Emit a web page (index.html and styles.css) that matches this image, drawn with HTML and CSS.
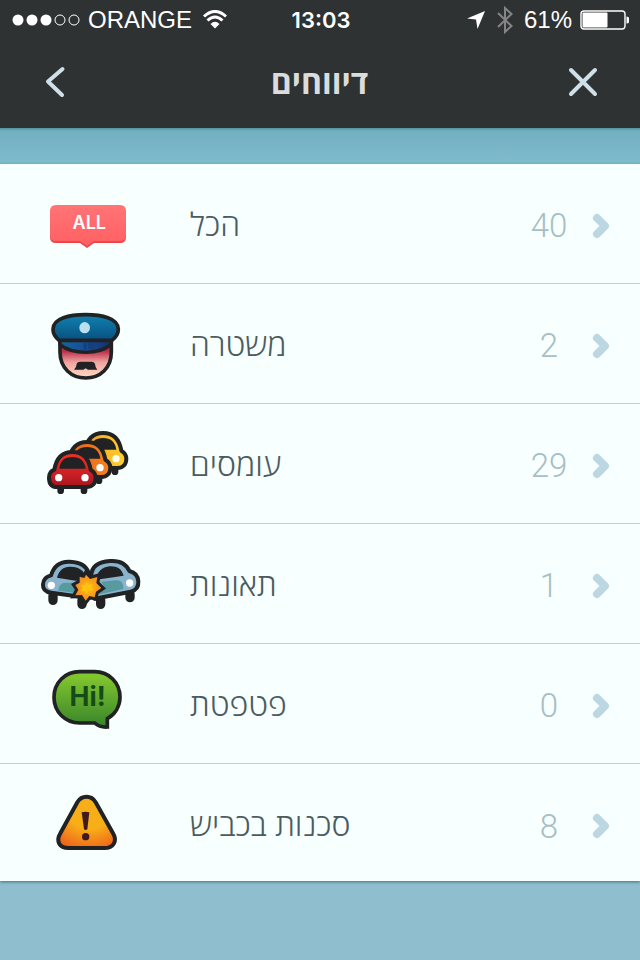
FILE: index.html
```html
<!DOCTYPE html>
<html lang="he">
<head>
    <meta charset="UTF-8">
    <meta name="viewport" content="width=device-width, initial-scale=1.0">
    <title>דיווחים</title>
    <link rel="stylesheet" href="styles.css">
</head>
<body>
    <header class="top">
        <div class="status-bar">
            <div class="carrier">
                <svg class="signal" width="68" height="14" viewBox="0 0 68 14">
                    <circle cx="6" cy="7" r="5.5" fill="#fff"/>
                    <circle cx="20" cy="7" r="5.5" fill="#fff"/>
                    <circle cx="34" cy="7" r="5.5" fill="#fff"/>
                    <circle cx="48" cy="7" r="5" fill="none" stroke="#fff"/>
                    <circle cx="62" cy="7" r="5" fill="none" stroke="#fff"/>
                </svg>
                <span>ORANGE</span>
                <svg width="26" height="20" viewBox="0 0 26 20" fill="none" stroke="#fff" stroke-width="3">
                    <path d="M2 6.5Q13-3.500 24 6.500"/>
                    <path d="M5.500 10.500Q13 3.500 20.500 10.500"/>
                    <path d="M8.500 14Q13 9.500 17.500 14L13 18.500Z" fill="#fff" stroke="none"/>
                </svg>
            </div>
            <span class="clock">13:03</span>
            <div class="indicators">
                <svg width="20" height="20" viewBox="0 0 20 20" fill="#fff">
                    <path d="M19 1L1 8.500L10 9.500L11.500 19Z"/>
                </svg>
                <svg width="18" height="28" viewBox="0 0 18 28" fill="none" stroke="#858585" stroke-width="2">
                    <path d="M2 7L15.500 20L9 26V2L15.500 8L2 21"/>
                </svg>
                <span class="battery-level">61%</span>
                <svg width="50" height="20" viewBox="0 0 50 20">
                    <rect x="1" y="1" width="44" height="18" rx="3" fill="none" stroke="#fff" stroke-width="1.400"/>
                    <rect x="2.500" y="2.500" width="25" height="15" rx="1" fill="#fff"/>
                    <path d="M46.500 6.500Q49 6.500 49 8V12Q49 13.500 46.500 13.500Z" fill="#fff"/>
                </svg>
            </div>
        </div>
        <nav class="title-bar">
            <button class="nav-button" type="button" aria-label="חזרה">
                <svg width="40" height="40" viewBox="0 0 40 40">
                    <path d="M26.500 7L12 19.500L26 33"/>
                </svg>
            </button>
            <h1>דיווחים</h1>
            <button class="nav-button" type="button" aria-label="סגירה">
                <svg width="40" height="40" viewBox="0 0 40 40">
                    <path d="M8 8L32 32M32 8L8 32"/>
                </svg>
            </button>
        </nav>
    </header>

    <main>
        <ul class="reports">
            <li>
                <a class="report" href="#all">
                    <svg class="icon" viewBox="0 -18 360 240">
                        <defs>
                            <linearGradient id="red" x1="0" y1="0" x2="0" y2="1">
                                <stop offset="0" stop-color="#ff7476"/>
                                <stop offset="1" stop-color="#ff6062"/>
                            </linearGradient>
                        </defs>
                        <path fill="#f04449" d="M78 50H270Q288 50 288 68V141Q288 159 270 159H192L171 174L150 159H78Q60 159 60 141V68Q60 50 78 50Z"/>
                        <path fill="url(#red)" d="M78 45H270Q288 45 288 63V135Q288 153 270 153H192L171 168L150 153H78Q60 153 60 135V63Q60 45 78 45Z"/>
                        <text class="all-text" x="178" y="117" text-anchor="middle">ALL</text>
                    </svg>
                    <span class="name">הכל</span>
                    <span class="count">40</span>
                    <svg class="chevron" viewBox="0 0 18 26"><path d="M5 5L13 13L5 21"/></svg>
                </a>
            </li>
            <li>
                <a class="report" href="#police">
                    <svg class="icon" viewBox="0 12 360 240">
                        <defs>
                            <linearGradient id="face" x1="0" y1="0" x2="0" y2="1">
                                <stop offset="0.350" stop-color="#b92f48"/>
                                <stop offset="0.620" stop-color="#f0a4a0"/>
                                <stop offset="1" stop-color="#ffdcc4"/>
                            </linearGradient>
                            <linearGradient id="cap" x1="0" y1="0" x2="0" y2="1">
                                <stop offset="0" stop-color="#1182b0"/>
                                <stop offset="1" stop-color="#075080"/>
                            </linearGradient>
                            <linearGradient id="visor">
                                <stop offset="0" stop-color="#12669c"/>
                                <stop offset="0.500" stop-color="#184d96"/>
                                <stop offset="1" stop-color="#142d70"/>
                            </linearGradient>
                        </defs>
                        <path fill="url(#face)" stroke="#202223" stroke-width="11" d="M90 110V156C90 204 124 234 167 234C211 234 244 204 244 156V110Z"/>
                        <path fill="url(#visor)" stroke="#202223" stroke-width="10" stroke-linejoin="round" d="M90 121H243V134C222 151 195 157 167 157C138 157 111 151 90 134Z"/>
                        <path fill="#143f80" d="M161 128H169V149H161ZM174 128H195V147H174Z"/>
                        <path fill="url(#cap)" stroke="#202223" stroke-width="11" stroke-linejoin="round" d="M87 121C76 112 69 100 69 88C69 54 120 44 167 44C214 44 265 54 265 88C265 100 258 112 246 121Z"/>
                        <ellipse cx="164" cy="83" rx="16" ry="17" fill="#b8e0ef"/>
                        <path fill="#202223" d="M132 209Q139 204 140 192Q142 185 152 185H184Q193 185 195 192Q196 204 202 209H174L167 205L160 209Z"/>
                    </svg>
                    <span class="name">משטרה</span>
                    <span class="count">2</span>
                    <svg class="chevron" viewBox="0 0 18 26"><path d="M5 5L13 13L5 21"/></svg>
                </a>
            </li>
            <li>
                <a class="report" href="#traffic">
                    <svg class="icon" viewBox="0 12 360 240">
                        <defs>
                            <linearGradient id="car-red" x1="0" y1="0" x2="0" y2="1">
                                <stop offset="0" stop-color="#ee3324"/>
                                <stop offset="0.500" stop-color="#d42325"/>
                                <stop offset="1" stop-color="#a81420"/>
                            </linearGradient>
                            <linearGradient id="car-orange">
                                <stop offset="0" stop-color="#e55d1c"/>
                                <stop offset="1" stop-color="#f58220"/>
                            </linearGradient>
                            <linearGradient id="car-yellow">
                                <stop offset="0" stop-color="#f7941e"/>
                                <stop offset="1" stop-color="#ffd42d"/>
                            </linearGradient>
                            <path id="car-body" d="M73 149C79 114 96 96 127 96C158 96 176 114 182 149C192 155 197 163 197 173C197 191 186 201 169 201H82C65 201 57 190 57 173C57 162 62 153 73 149Z"/>
                            <path id="car-window" d="M88 146C91 122 104 111 127 111C150 111 163 122 167 146Z"/>
                        </defs>
                        <g transform="translate(92 -57)">
                            <path class="wheel" d="M163 205V212"/>
                            <use href="#car-body" class="outline" fill="url(#car-yellow)"/>
                            <use href="#car-window" fill="#202223"/>
                            <circle cx="166" cy="173" r="11" fill="#fffdf0"/>
                        </g>
                        <g transform="translate(44 -30)">
                            <path class="wheel" d="M163 205V212"/>
                            <use href="#car-body" class="outline" fill="url(#car-orange)"/>
                            <use href="#car-window" fill="#202223"/>
                            <circle cx="166" cy="173" r="11" fill="#fff"/>
                        </g>
                        <path class="wheel" d="M92 205V212M162 205V212"/>
                        <use href="#car-body" class="outline" fill="url(#car-red)"/>
                        <use href="#car-window" fill="#202223"/>
                        <circle cx="86" cy="173" r="11" fill="#fff"/>
                        <circle cx="165" cy="173" r="11" fill="#fff"/>
                    </svg>
                    <span class="name">עומסים</span>
                    <span class="count">29</span>
                    <svg class="chevron" viewBox="0 0 18 26"><path d="M5 5L13 13L5 21"/></svg>
                </a>
            </li>
            <li>
                <a class="report" href="#accidents">
                    <svg class="icon" viewBox="0 -3 360 240">
                        <defs>
                            <radialGradient id="burst">
                                <stop offset="0" stop-color="#ffc20e"/>
                                <stop offset="1" stop-color="#f58a22"/>
                            </radialGradient>
                        </defs>
                        <path class="wheel crash-wheel" d="M69 152V166M156 166V178M212 166V178M300 147V158"/>
                        <path class="outline" fill="#8ab4cd" d="M63 91C72 61 93 49 119 50C150 51 174 63 178 93V159L64 143C47 141 38 133 39 118C40 103 49 94 63 91Z"/>
                        <path class="outline" fill="#8ab4cd" d="M184 91C185 61 209 50 240 48C270 46 288 55 298 78C315 82 324 93 325 109C326 124 318 136 302 140L194 161Z"/>
                        <path fill="#202223" d="M81 98C88 74 101 64 122 65C148 66 163 76 168 98L137 107ZM199 104C201 80 216 66 239 64C262 63 275 72 281 92Z"/>
                        <path fill="#579ba0" d="M85 137C87 120 94 113 106 113H133L142 132L132 143ZM213 110L257 106C273 105 281 115 280 132L204 149L208 134L225 128Z"/>
                        <circle cx="64" cy="121" r="11" fill="#fff"/>
                        <circle cx="299" cy="114" r="11" fill="#fff"/>
                        <path fill="url(#burst)" stroke="#202223" stroke-width="18" paint-order="stroke" d="M168 89L180 102L202 96L199 114L214 129L198 140L194 157L178 153L167 167L156 150L136 151L145 134L136 120L149 113L149 95L163 99Z"/>
                        <path fill="#ffc20e" d="M169 110L176 119L188 117L184 127L190 137L176 137L169 147L164 138L153 139L159 128L153 119L164 120Z"/>
                    </svg>
                    <span class="name">תאונות</span>
                    <span class="count">1</span>
                    <svg class="chevron" viewBox="0 0 18 26"><path d="M5 5L13 13L5 21"/></svg>
                </a>
            </li>
            <li>
                <a class="report" href="#chat">
                    <svg class="icon" viewBox="0 12 360 240">
                        <defs>
                            <linearGradient id="green" x1="0" y1="0" x2="0" y2="1">
                                <stop offset="0.100" stop-color="#80c42e"/>
                                <stop offset="1" stop-color="#37842b"/>
                            </linearGradient>
                        </defs>
                        <path fill="url(#green)" stroke="#202223" stroke-width="11" d="M149 35H194C237 35 270 68 270 111C270 139 255 163 232 176V201C216 202 203 197 194 189H149C105 189 72 155 72 112C72 68 105 35 149 35Z"/>
                        <text class="hi-text" x="173" y="137" text-anchor="middle">Hi!</text>
                    </svg>
                    <span class="name">פטפטת</span>
                    <span class="count">0</span>
                    <svg class="chevron" viewBox="0 0 18 26"><path d="M5 5L13 13L5 21"/></svg>
                </a>
            </li>
            <li>
                <a class="report" href="#hazards">
                    <svg class="icon" viewBox="0 -3 360 240">
                        <defs>
                            <radialGradient id="amber" cx="0.550" cy="0.250" r="0.850">
                                <stop offset="0.450" stop-color="#f7ae18"/>
                                <stop offset="1" stop-color="#ee5c1c"/>
                            </radialGradient>
                        </defs>
                        <path fill="url(#amber)" stroke="#202223" stroke-width="12" d="M142 52C155 30 184 30 197 52L249 145C263 169 250 189 223 189H116C88 189 77 169 91 145Z"/>
                        <path fill="#42191b" d="M155 82Q166 79 178 82L172 133Q167 137 162 133Z"/>
                        <circle cx="167" cy="155" r="11" fill="#42191b"/>
                    </svg>
                    <span class="name">סכנות בכביש</span>
                    <span class="count">8</span>
                    <svg class="chevron" viewBox="0 0 18 26"><path d="M5 5L13 13L5 21"/></svg>
                </a>
            </li>
        </ul>
    </main>
</body>
</html>
```
FILE: styles.css
```css
body {
    margin: 0;
    min-height: 100vh;
    background-color: #8fbfcf;
    font-family: "Open Sans", "Noto Sans", sans-serif;
}

svg {
    display: block;
    flex-shrink: 0;
}

.top {
    background-color: #2e3233;
    color: #ffffff;
}

.status-bar {
    display: grid;
    grid-template-columns: 1fr auto 1fr;
    align-items: center;
    height: 40px;
    padding: 0 10px 0 12px;
    font-family: "Liberation Sans", sans-serif;
    font-size: 24px;
}

.carrier,
.indicators {
    display: flex;
    align-items: center;
    gap: 10px;
}

.signal {
    margin-right: -2px;
}

.indicators {
    justify-content: flex-end;
}

.battery-level {
    margin-right: -2px;
}

.clock {
    font-family: Inter, sans-serif;
    font-size: 22px;
    font-weight: 600;
}

.title-bar {
    display: flex;
    justify-content: space-between;
    align-items: center;
    height: 84px;
    padding: 0 37px 4px 36px;
}

.title-bar h1 {
    margin: 0;
    font-size: 32px;
    line-height: 40px;
    font-weight: 700;
    color: #dcdcdc;
}

.nav-button {
    padding: 0;
    border: none;
    background: none;
    cursor: pointer;
}

.nav-button path {
    fill: none;
    stroke: #cfe0e8;
    stroke-width: 4;
    stroke-linecap: round;
    stroke-linejoin: round;
}

main {
    padding-top: 36px;
    background: linear-gradient(#5294a0 0, #73afc0 3px, #7fbccc 36px);
}

.reports {
    margin: 0;
    padding: 0;
    list-style: none;
    background-color: #f7ffff;
    box-shadow: 0 1px 3px #3f7480;
}

.report {
    display: flex;
    align-items: center;
    box-sizing: border-box;
    height: 120px;
    padding: 0 30px;
    border-bottom: 1px solid #c0d0d8;
    color: #4b5b60;
    text-decoration: none;
}

.reports li:last-child .report {
    height: 117px;
    padding-top: 3px;
    border-bottom: none;
}

.icon {
    width: 120px;
    height: 80px;
}

.name {
    flex: 1;
    padding-left: 40px;
    font-size: 32px;
    font-weight: 300;
    line-height: 44px;
}

.count {
    width: 38px;
    padding-top: 4px;
    margin-right: 24px;
    color: #a6bec4;
    font-family: Roboto, sans-serif;
    font-size: 33px;
    font-weight: 300;
    text-align: center;
}

.chevron {
    width: 18px;
    height: 26px;
    padding-top: 4px;
}

.chevron path {
    fill: none;
    stroke: #bbd8e2;
    stroke-width: 8;
    stroke-linecap: round;
    stroke-linejoin: round;
}

.outline {
    stroke: #202223;
    stroke-width: 12;
    stroke-linejoin: round;
}

.wheel {
    fill: none;
    stroke: #202223;
    stroke-width: 20;
    stroke-linecap: round;
}

.crash-wheel {
    stroke-width: 28;
}

.all-text {
    fill: #ffffff;
    font-family: Inter, sans-serif;
    font-size: 54px;
    font-weight: 600;
}

.hi-text {
    fill: #164b17;
    font-family: Inter, sans-serif;
    font-size: 80px;
    font-weight: 700;
}
```
